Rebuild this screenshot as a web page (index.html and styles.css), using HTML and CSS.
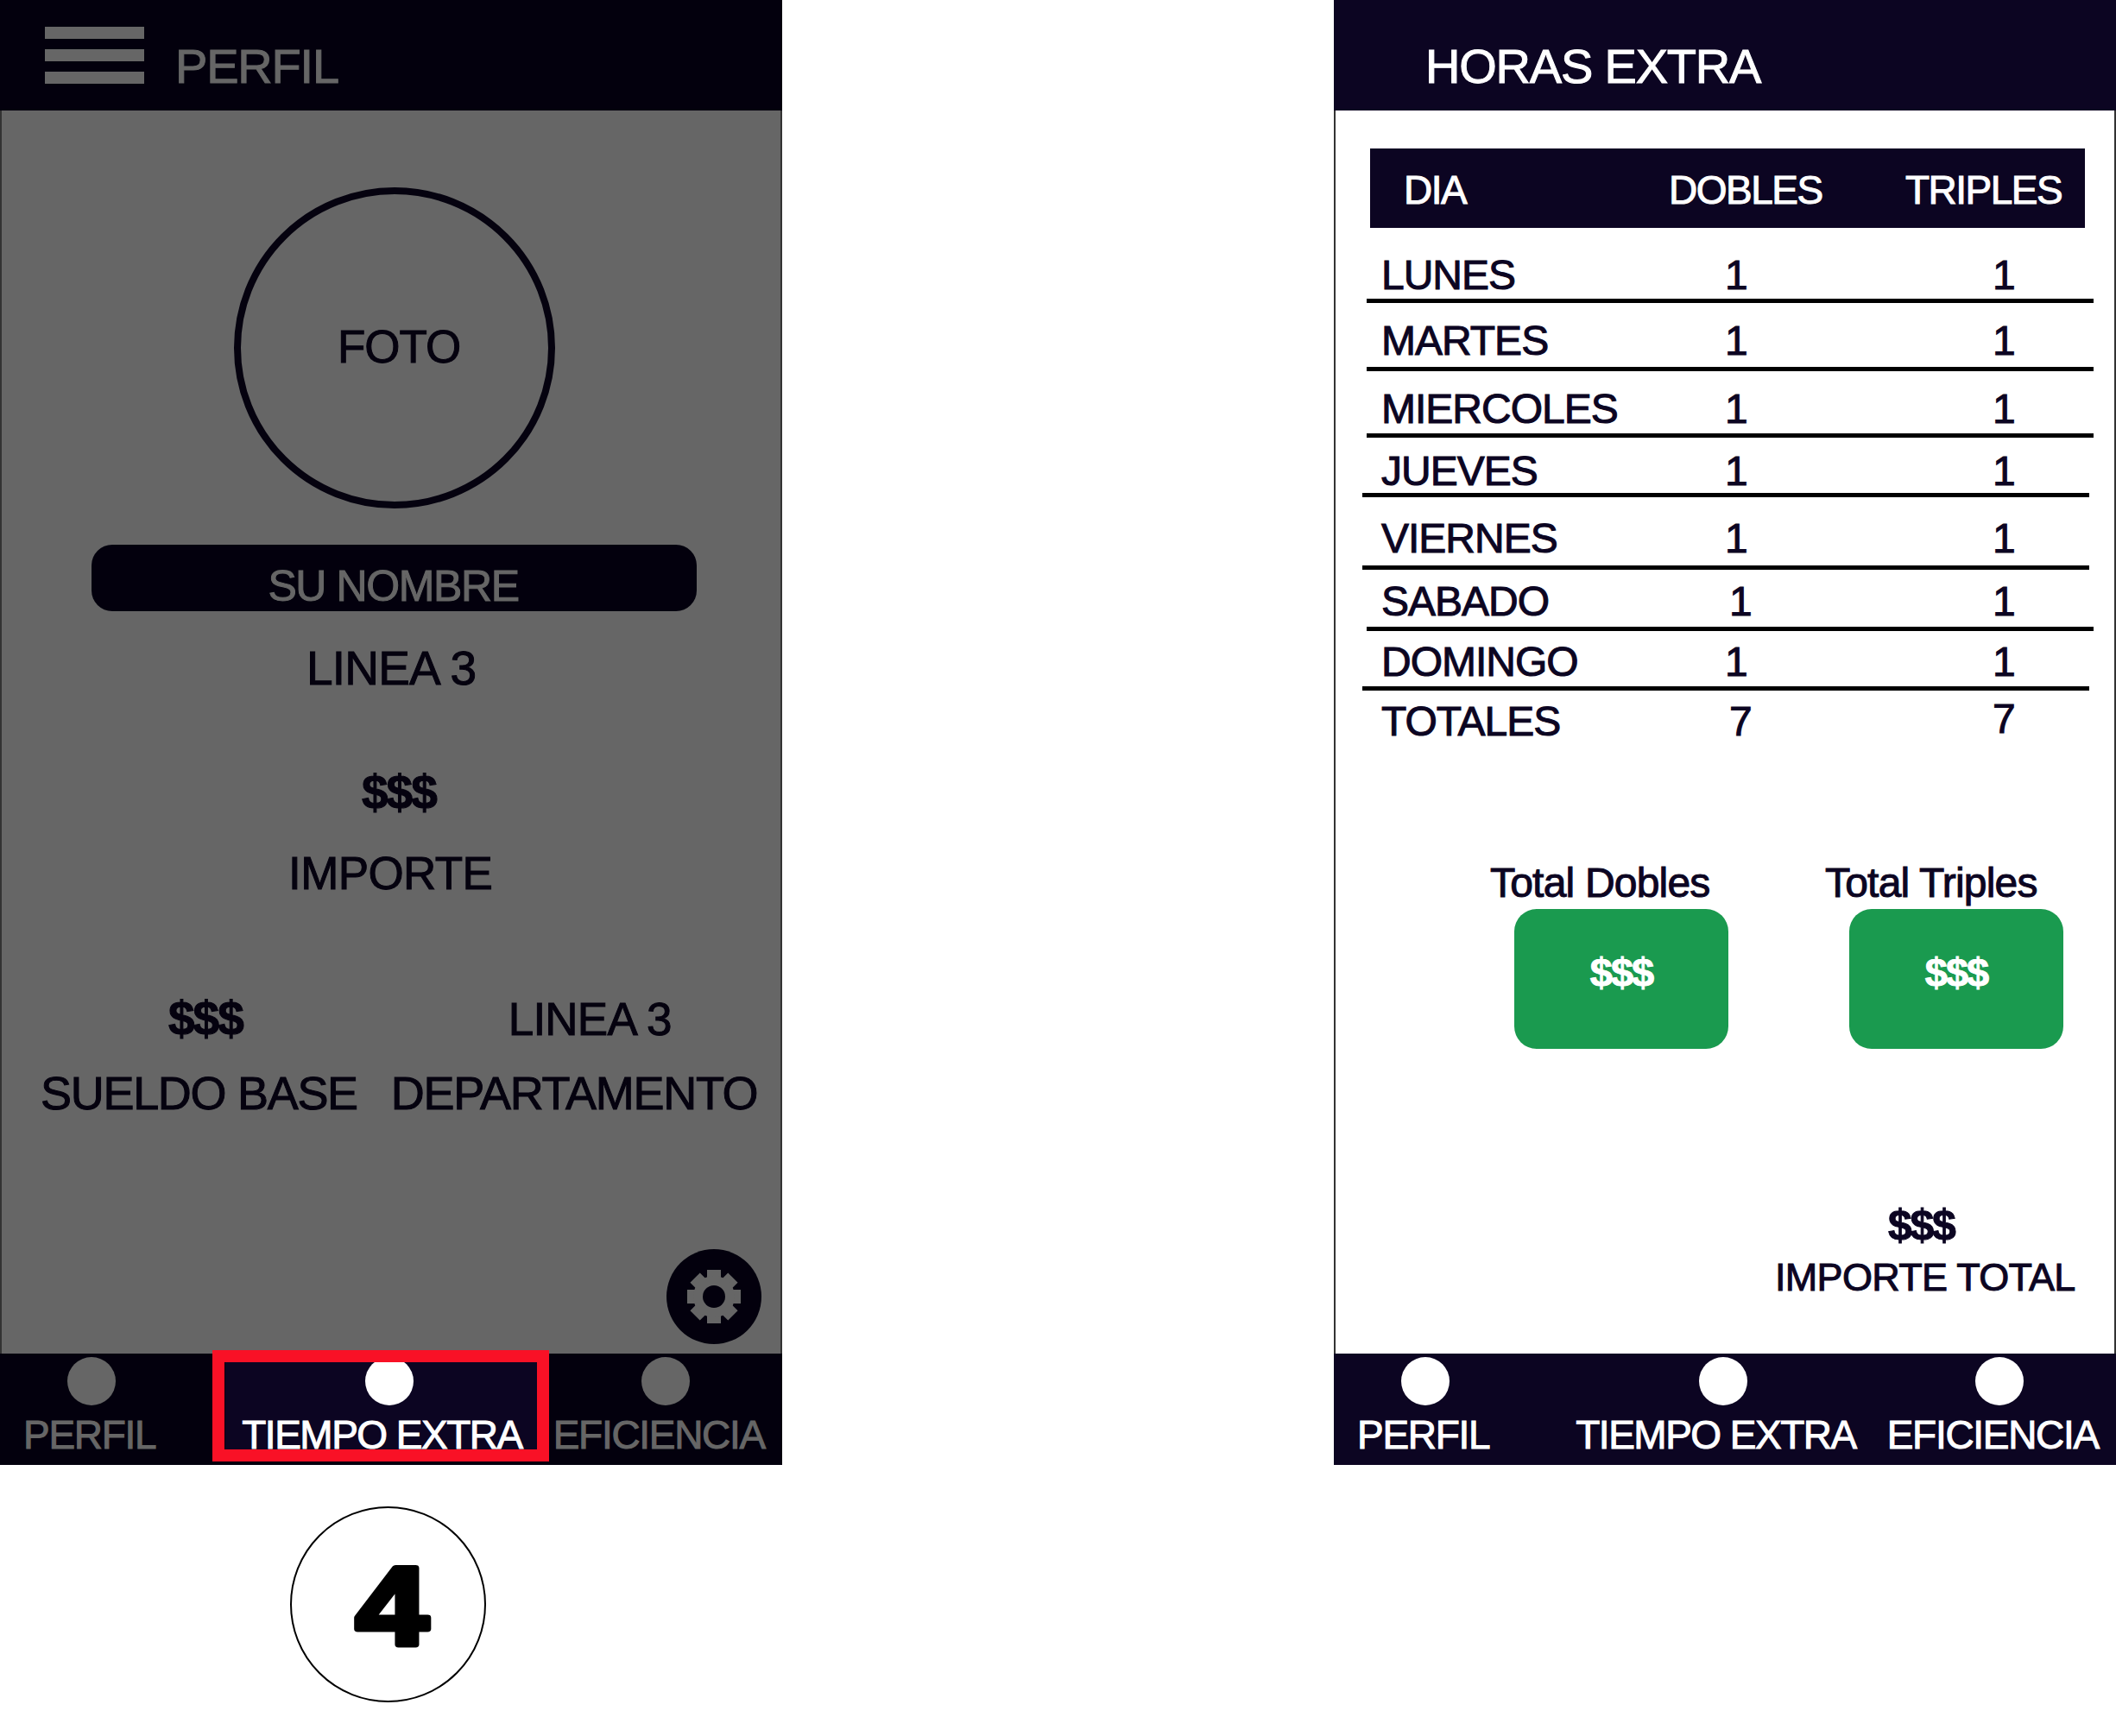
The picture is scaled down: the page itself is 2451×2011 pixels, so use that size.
FILE: index.html
```html
<!DOCTYPE html>
<html lang="es">
<head>
<meta charset="utf-8">
<title>Horas extra</title>
<link rel="stylesheet" href="styles.css">
</head>
<body>
<div class="canvas">
  <div class="column">
    <section class="phone dimmed">
      <header class="bar">
        <div class="burger"><span></span><span></span><span></span></div>
        <h1 class="title">PERFIL</h1>
      </header>
      <main class="profile">
        <div class="photo">FOTO</div>
        <div class="name"><span>SU NOMBRE</span></div>
        <p class="t line3">LINEA 3</p>
        <p class="t money">$$$</p>
        <p class="t amount">IMPORTE</p>
        <div class="pair pair-top"><span class="t money-b">$$$</span><span class="t">LINEA 3</span></div>
        <div class="pair pair-bottom"><span class="t">SUELDO BASE</span><span class="t">DEPARTAMENTO</span></div>
        <div class="gear">
          <svg viewBox="0 0 110 110" width="110" height="110" aria-hidden="true">
            <g fill="#666">
              <rect x="47" y="24" width="16" height="62"/>
              <rect x="47" y="24" width="16" height="62" transform="rotate(45 55 55)"/>
              <rect x="47" y="24" width="16" height="62" transform="rotate(90 55 55)"/>
              <rect x="47" y="24" width="16" height="62" transform="rotate(135 55 55)"/>
              <circle cx="55" cy="55" r="24"/>
            </g>
            <circle cx="55" cy="55" r="13" fill="#03000d"/>
          </svg>
        </div>
      </main>
      <nav class="tabs">
        <div class="tab"><i class="dot"></i><span>PERFIL</span></div>
        <div class="tab tab-on"><i class="dot"></i><span>TIEMPO EXTRA</span></div>
        <div class="tab"><i class="dot"></i><span>EFICIENCIA</span></div>
        <div class="frame"></div>
      </nav>
    </section>
    <div class="badge">
      <svg class="badge-num" viewBox="0 0 100 110" width="100" height="110" aria-label="4">
        <text x="50" y="98" text-anchor="middle" transform="translate(50 0) scale(1.18 1) translate(-50 0)">4</text>
      </svg>
    </div>
  </div>

  <section class="phone lit">
    <header class="bar">
      <h1 class="title">HORAS EXTRA</h1>
    </header>
    <main class="hours">
      <div class="thead"><span>DIA</span><span>DOBLES</span><span>TRIPLES</span></div>
      <div class="rows">
        <div class="row"><span>LUNES</span><span>1</span><span>1</span></div>
        <div class="row"><span>MARTES</span><span>1</span><span>1</span></div>
        <div class="row"><span>MIERCOLES</span><span>1</span><span>1</span></div>
        <div class="row"><span>JUEVES</span><span>1</span><span>1</span></div>
        <div class="row"><span>VIERNES</span><span>1</span><span>1</span></div>
        <div class="row"><span>SABADO</span><span>1</span><span>1</span></div>
        <div class="row"><span>DOMINGO</span><span>1</span><span>1</span></div>
        <div class="row"><span>TOTALES</span><span>7</span><span>7</span></div>
      </div>
      <div class="totals">
        <div class="total">
          <div class="total-label">Total Dobles</div>
          <div class="card">$$$</div>
        </div>
        <div class="total">
          <div class="total-label">Total Triples</div>
          <div class="card">$$$</div>
        </div>
      </div>
      <div class="grand">
        <div class="grand-money">$$$</div>
        <div class="grand-label">IMPORTE TOTAL</div>
      </div>
    </main>
    <nav class="tabs">
      <div class="tab"><i class="dot"></i><span>PERFIL</span></div>
      <div class="tab tab-on"><i class="dot"></i><span>TIEMPO EXTRA</span></div>
      <div class="tab"><i class="dot"></i><span>EFICIENCIA</span></div>
    </nav>
  </section>
</div>
</body>
</html>
```
FILE: styles.css
```css
* { box-sizing: border-box; }
html, body { margin: 0; background: #fff; }
body { font-family: "Liberation Sans", Arial, sans-serif; -webkit-text-stroke: 1px currentColor; }
.canvas { display: flex; gap: 639px; width: 2451px; height: 2011px; overflow: hidden; }
.column { display: flex; flex-direction: column; width: 906px; }
.phone { display: flex; flex-direction: column; width: 906px; height: 1697px; }
.phone main { flex: 1; display: flex; flex-direction: column; border-left: 2px solid #333; border-right: 2px solid #333; }

.bar { height: 128px; display: flex; align-items: flex-start; }
.title { margin: 49px 0 0; font-size: 56px; line-height: 56px; font-weight: 400; letter-spacing: -1.2px; }

.dimmed .bar { background: #03000d; padding-left: 52px; color: #666; }
.lit .bar { background: #0c0522; padding-left: 106px; color: #fff; }

.burger { display: flex; flex-direction: column; width: 115px; margin-top: 31px; margin-right: 36px; }
.burger span { height: 14px; background: #666; }
.burger span + span { margin-top: 12px; }

.profile { background: #666; color: #05020f; }
.photo {
  width: 372px; height: 372px; margin: 89px 0 0 269px; padding: 0 0 3px 10px;
  border: 8px solid #05020f; border-radius: 50%;
  display: flex; align-items: center; justify-content: center;
  font-size: 53px; letter-spacing: -1px;
}
.name {
  width: 701px; height: 77px; margin: 42px 0 0 104px; padding: 0 2px 4px 0;
  background: #03000d; border-radius: 24px; color: #666;
  display: flex; align-items: flex-end; justify-content: center;
  font-size: 50px; line-height: 50px; letter-spacing: -1.4px;
}
.t { margin: 0; font-size: 53px; line-height: 53px; letter-spacing: -.8px; }
.line3 { margin: 40px 0 0 353px; font-size: 55px; }
.money { margin: 91px 0 0 417px; font-size: 55px; font-weight: 700; letter-spacing: -2px; }
.amount { margin: 40px 0 0 332px; letter-spacing: -.6px; }
.pair { display: flex; }
.pair-top { margin-top: 116px; padding-left: 193px; gap: 308px; }
.money-b { font-size: 55px; font-weight: 700; letter-spacing: -2px; }
.pair-bottom { margin-top: 32px; padding-left: 45px; gap: 39px; }
.pair-bottom .t { font-size: 54px; line-height: 54px; letter-spacing: -1.3px; }
.gear {
  width: 110px; height: 110px; margin: auto 22px 11px auto;
  border-radius: 50%; background: #03000d;
}
.gear svg { display: block; }

.tabs { position: relative; height: 129px; display: flex; padding-left: 27px; }
.dimmed .tabs { background: #03000d; color: #666; }
.lit .tabs { background: #0c0522; color: #fff; }
.tab {
  position: relative; z-index: 1;
  display: flex; flex-direction: column; align-items: center;
  padding-top: 4px; font-size: 46px; line-height: 46px; letter-spacing: -1.3px; white-space: nowrap;
}
.dot { display: block; width: 56px; height: 56px; border-radius: 50%; background: currentColor; margin: 0 0 11px 4px; }
.tab-on { margin-left: 100px; letter-spacing: -1.5px; }
.tab-on + .tab { margin-left: 36px; }
.tab-on .dot { margin-left: 18px; }
.tab-on + .tab .dot { margin-left: 16px; }
.dimmed .tab-on { color: #fff; }
.dimmed .tab .dot { background: #666; }
.dimmed .tab-on .dot { background: #fff; }
.lit .tab .dot { background: #fff; }
.dimmed .tabs::before {
  content: ""; position: absolute; left: 261px; top: 10px; width: 361px; height: 101px; background: #0c0522;
}
.frame {
  position: absolute; z-index: 2; left: 246px; top: -4px; width: 390px; height: 129px;
  border: 14px solid #f91126;
}

.badge {
  width: 227px; height: 227px; margin: 48px 0 0 336px;
  border: 2px solid #000; border-radius: 50%;
  display: flex; align-items: center; justify-content: center;
  -webkit-text-stroke: 0;
}
.badge-num { display: block; margin: 6px 0 0 8px; overflow: visible; }
.badge-num text {
  font-family: "Liberation Sans", sans-serif; font-weight: 700; font-size: 128px;
  fill: #000; stroke: #000; stroke-width: 7px; stroke-linejoin: round;
}

.hours { background: #fff; color: #0c0522; position: relative; }
.thead {
  display: flex; align-items: center; width: 828px; height: 92px; margin: 44px 0 0 40px; padding-top: 3px;
  background: #0c0522; color: #fff; font-size: 46px; letter-spacing: -1.5px;
}
.thead span:nth-child(1) { margin-left: 39px; width: 307px; }
.thead span:nth-child(2) { width: 274px; }

.rows { display: flex; flex-direction: column; }
.row {
  display: flex; align-items: flex-end; width: 842px; margin-left: 36px;
  border-bottom: 5px solid #000; font-size: 48px; line-height: 48px; letter-spacing: -1px;
}
.row span:nth-child(1) { width: 398px; margin-left: 17px; }
.row span:nth-child(2) { width: 310px; }
.row:nth-child(1) { height: 87px; padding-bottom: 3px; }
.row:nth-child(2) { height: 79px; padding-bottom: 6px; }
.row:nth-child(3) { height: 77px; padding-bottom: 4px; }
.row:nth-child(4) { height: 69px; padding-bottom: 1px; margin-left: 31px; }
.row:nth-child(5) { height: 84px; padding-bottom: 7px; margin-left: 31px; }
.row:nth-child(6) { height: 71px; padding-bottom: 5px; }
.row:nth-child(7) { height: 69px; padding-bottom: 4px; margin-left: 31px; }
.row:nth-child(8) { height: 60px; padding-bottom: 0; border-bottom: 0; }
.row:nth-child(4) span:nth-child(1),
.row:nth-child(5) span:nth-child(1),
.row:nth-child(7) span:nth-child(1) { margin-left: 22px; }
.row:nth-child(6) span:nth-child(2) { margin-left: 5px; width: 305px; }
.row:nth-child(8) span:nth-child(2) { margin-left: 5px; width: 305px; }
.row:nth-child(8) span:nth-child(3) { margin-bottom: 3px; }

.totals { display: flex; margin-top: 139px; padding-left: 179px; gap: 133px; }
.total { width: 255px; position: relative; }
.total-label { font-size: 48px; line-height: 48px; letter-spacing: -.8px; white-space: nowrap; }
.card {
  width: 248px; height: 162px; margin: 6px 0 0 28px; padding-top: 52px;
  background: #1a9a4f; border-radius: 26px; color: #fff;
  text-align: center; font-size: 47px; line-height: 43px; font-weight: 700; letter-spacing: -2px;
}
.grand { margin: 181px 0 0 509px; width: 348px; }
.grand-money { padding-left: 131px; font-size: 50px; line-height: 46px; font-weight: 700; letter-spacing: -2.3px; }
.grand-label { margin-top: 15px; font-size: 45px; line-height: 45px; letter-spacing: -.7px; white-space: nowrap; }
```
